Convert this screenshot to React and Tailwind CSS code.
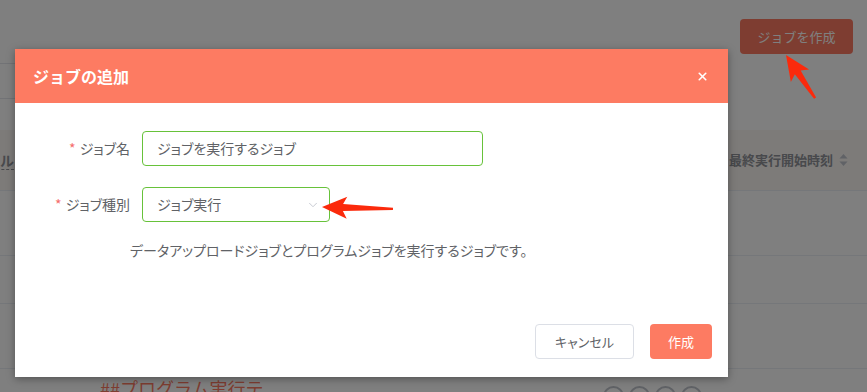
import { X, ChevronDown } from "lucide-react";

const Arrow = ({ x, y, angle, length }) => (
  <g transform={`translate(${x} ${y}) rotate(${angle})`}>
    <polygon
      points={`0,0 25,-11 21,-3.5 ${length},-1.2 ${length},1.2 21,3.5 25,11`}
      fill="#fb2a0c"
    />
  </g>
);

const Background = () => (
  <div className="w-full h-full bg-white">
    <div className="pt-[19px] pr-[14px] flex justify-end">
      <button className="w-[113px] h-[35px] rounded-[4px] bg-[#fd7b62] text-white text-[13px]">
        ジョブを作成
      </button>
    </div>
    <div className="mt-[9px] h-[36px] w-[720px] border-t border-b border-[#e4e7ed]" />
    <div className="mt-[31px] h-[61px] bg-[#faf6f3] border-b border-[#ebeef5] flex items-center text-[14px] font-bold text-[#909399]">
      <span className="-ml-[42px] border-b border-dashed border-[#909399] leading-[18px]">ファイル</span>
      <span className="ml-auto mr-[19px] flex items-center gap-[6px] text-[13px]">
        最終実行開始時刻
        <svg width="9" height="14" viewBox="0 0 9 14">
          <polygon points="4.5,1 8.5,5.5 0.5,5.5" fill="#c0c4cc" />
          <polygon points="4.5,13 8.5,8.5 0.5,8.5" fill="#c0c4cc" />
        </svg>
      </span>
    </div>
    <div className="h-[65px] border-b border-[#ebeef5]" />
    <div className="h-[48px] border-b border-[#ebeef5]" />
    <div className="h-[65px] border-b border-[#ebeef5]" />
    <div className="flex items-start pt-[7px]">
      <span className="ml-[100px] text-[18px] leading-[24px] text-[#fd7b62]">##プログラム実行テ</span>
      <div className="ml-auto mr-[165px] mt-[10px] flex gap-[5px]">
        <div className="w-[21px] h-[21px] rounded-full border-2 border-[#c0c4cc]" />
        <div className="w-[21px] h-[21px] rounded-full border-2 border-[#c0c4cc]" />
        <div className="w-[21px] h-[21px] rounded-full border-2 border-[#c0c4cc]" />
        <div className="w-[21px] h-[21px] rounded-full border-2 border-[#c0c4cc]" />
      </div>
    </div>
  </div>
);

const JobDialog = () => (
  <div className="absolute left-[15px] top-[49px] w-[713px] h-[328px] bg-white flex flex-col shadow-[0_2px_8px_rgba(0,0,0,0.35)] [font-feature-settings:'palt']">
    <div className="h-[54px] bg-[#fd7b62] flex items-center justify-between pl-[18px] pr-[19px]">
      <span className="text-[16px] font-bold text-white [font-feature-settings:normal]">ジョブの追加</span>
      <X size={13} strokeWidth={3} className="text-white" />
    </div>

    <div className="pt-[28px] text-[14px] text-[#606266]">
      <div className="flex items-center">
        <label className="w-[127px] pr-[12px] text-right">
          <span className="text-[#f56c6c] mr-[4px]">*</span>ジョブ名
        </label>
        <div className="w-[341px] h-[35px] border border-[#67c23a] rounded-[4px] px-[14px] flex items-center">
          ジョブを実行するジョブ
        </div>
      </div>

      <div className="flex items-center mt-[21px]">
        <label className="w-[127px] pr-[12px] text-right">
          <span className="text-[#f56c6c] mr-[4px]">*</span>ジョブ種別
        </label>
        <div className="w-[188px] h-[35px] border border-[#67c23a] rounded-[4px] pl-[14px] pr-[9px] flex items-center justify-between">
          <span>ジョブ実行</span>
          <ChevronDown size={14} strokeWidth={1.5} className="text-[#c0c4cc]" />
        </div>
      </div>

      <p className="ml-[115px] mt-[20px] text-[14px] leading-[17px]">
        データアップロードジョブとプログラムジョブを実行するジョブです。
      </p>
    </div>

    <div className="mt-auto pb-[18px] pr-[16px] flex justify-end gap-[16px] text-[13px]">
      <button className="w-[99px] h-[35px] border border-[#dcdfe6] rounded-[4px] text-[#606266] bg-white">
        キャンセル
      </button>
      <button className="w-[62px] h-[35px] rounded-[4px] bg-[#fd7b62] text-white">
        作成
      </button>
    </div>
  </div>
);

export default function App() {
  return (
    <div className="relative w-[867px] h-[392px] overflow-hidden font-['Noto_Sans_CJK_JP','Noto_Sans',sans-serif]">
      <Background />
      <div className="absolute inset-0 bg-black/50" />
      <JobDialog />
      <svg className="absolute inset-0" width="867" height="392">
        <Arrow x={786} y={55} angle={56} length={52} />
        <Arrow x={322} y={207} angle={1.5} length={71} />
      </svg>
    </div>
  );
}
